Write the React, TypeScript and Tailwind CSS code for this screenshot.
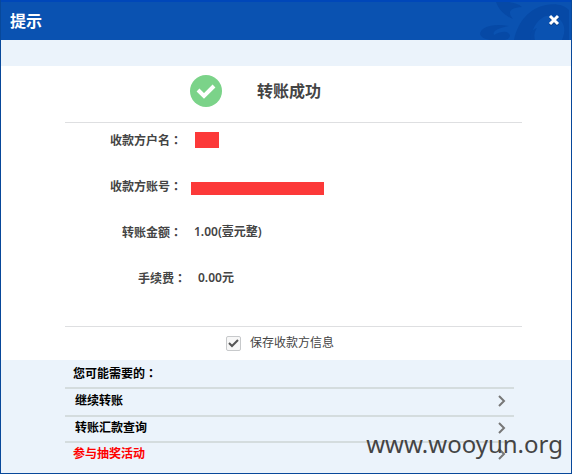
import React from 'react';

const links = [
  { label: '继续转账', row: 'h-7 text-black', text: 'pl-[10px]' },
  { label: '转账汇款查询', row: 'h-[26px] text-black', text: 'pl-[10px]' },
  { label: '参与抽奖活动', row: 'h-[26px] text-[#ff0000]', text: 'pl-2' },
];

function Colon() {
  return <span className="font-['Noto_Sans_CJK_TC',sans-serif]">：</span>;
}

function Row({ label, wide, children }: { label: string; wide?: boolean; children: React.ReactNode }) {
  return (
    <div className="flex h-[46px] items-center">
      <dt className={`${wide ? 'w-[121px]' : 'w-[117px]'} text-right leading-4`}>
        {label}
        <Colon />
      </dt>
      <dd className="flex items-center pl-[9px]">{children}</dd>
    </div>
  );
}

function Header() {
  return (
    <header className="relative flex h-10 items-center justify-between overflow-hidden border-t-2 border-[#0047b9] bg-[#0a52b1] pr-[10px] pl-[9px]">
      <svg className="absolute -top-0.5 right-0" width="91" height="40" viewBox="0 0 91 40" aria-hidden="true">
        <g fill="#0649a6">
          <path d="M16 2C19 10 25 16 33 19C28 13 28 8 42 7C39 4 34 3 29 2Z" />
          <path d="M0 34C1 27 12 23 29 26C18 28 12 31 14 35C23 30 29 31 30 36C29 39 26 40 24 40H10C4 39 1 37 0 34Z" />
          <path d="M34 40C38 21 50 8 66 5C76 3 84 5 89 10V40H82C86 31 85 23 78 18C65 10 52 23 51 40Z" />
          <path d="M51 40C49 34 51 30 57 28C54 32 54 37 55 40Z" />
        </g>
      </svg>
      <h1 className="text-base font-semibold text-white">提示</h1>
      <button type="button" aria-label="关闭" className="relative">
        <svg width="14" height="14" viewBox="0 0 14 14" fill="none" strokeWidth="3">
          <path d="M3 3L11 11M11 3L3 11" stroke="#073a80" />
          <path d="M3 2L11 10M11 2L3 10" stroke="white" />
        </svg>
      </button>
    </header>
  );
}

export default function App() {
  return (
    <main className="relative w-full border-x border-b border-[#08489a] bg-[#ebf3fb] font-['Noto_Sans','Noto_Sans_CJK_SC',sans-serif] text-xs text-[#444]">
      <Header />
      <section className="mt-[26px] bg-white pr-[49px] pl-16">
        <div className="flex h-[57px] items-center border-b border-[#dedfe1] pb-1.5 pl-[125px]">
          <svg width="32" height="32" viewBox="0 0 32 32" aria-hidden="true">
            <circle cx="16" cy="16" r="16" fill="#7bd389" />
            <path d="M8 15L14 21L24 11" fill="none" stroke="white" strokeWidth="4" />
          </svg>
          <h2 className="pl-[35px] text-base leading-5 font-semibold">转账成功</h2>
        </div>
        <dl className="-mt-[6px] pb-[25px] font-semibold">
          <Row label="收款方户名">
            <span className="ml-1 h-4 w-6 bg-[#fc3939]" />
          </Row>
          <Row label="收款方账号">
            <span className="mt-1 h-[13px] w-[133px] bg-[#fc3939]" />
          </Row>
          <Row label="转账金额">
            <span className="pl-[3px]">1.00(壹元整)</span>
          </Row>
          <Row label="手续费" wide>
            <span className="pl-[3px]">0.00元</span>
          </Row>
        </dl>
        <label className="flex h-[34px] items-center border-t border-[#dedfe1] pb-px pl-[161px]">
          <span className="relative flex">
            <input
              type="checkbox"
              defaultChecked
              className="peer size-[15px] appearance-none rounded-xs border border-[#c7c9cb] bg-[#f7f7f7]"
            />
            <svg
              className="pointer-events-none invisible absolute inset-0 peer-checked:visible"
              width="15"
              height="15"
              viewBox="0 0 15 15"
              fill="none"
              stroke="#555"
              strokeWidth="2"
            >
              <path d="M3 7L6 10L12 4" />
            </svg>
          </span>
          <span className="pl-[9px]">保存收款方信息</span>
        </label>
      </section>
      <nav className="pr-[57px] pb-[6px] pl-16 font-semibold">
        <h3 className="h-[27px] pt-[5px] pl-2 leading-4 text-black">
          您可能需要的
          <Colon />
        </h3>
        {links.map((l) => (
          <a key={l.label} href="#" className={`flex items-center justify-between border-t-2 border-[#d4dcde] pr-2 pb-0.5 ${l.row}`}>
            <span className={l.text}>{l.label}</span>
            <svg width="9" height="12" viewBox="0 0 9 12" fill="none" stroke="#777" strokeWidth="2">
              <path d="M2 1L7 6L2 11" />
            </svg>
          </a>
        ))}
      </nav>
      <p className="pointer-events-none absolute right-2 bottom-[9px] font-['Noto_Sans'] text-2xl leading-10 font-normal text-[#444]">
        www.wooyun.org
      </p>
    </main>
  );
}
